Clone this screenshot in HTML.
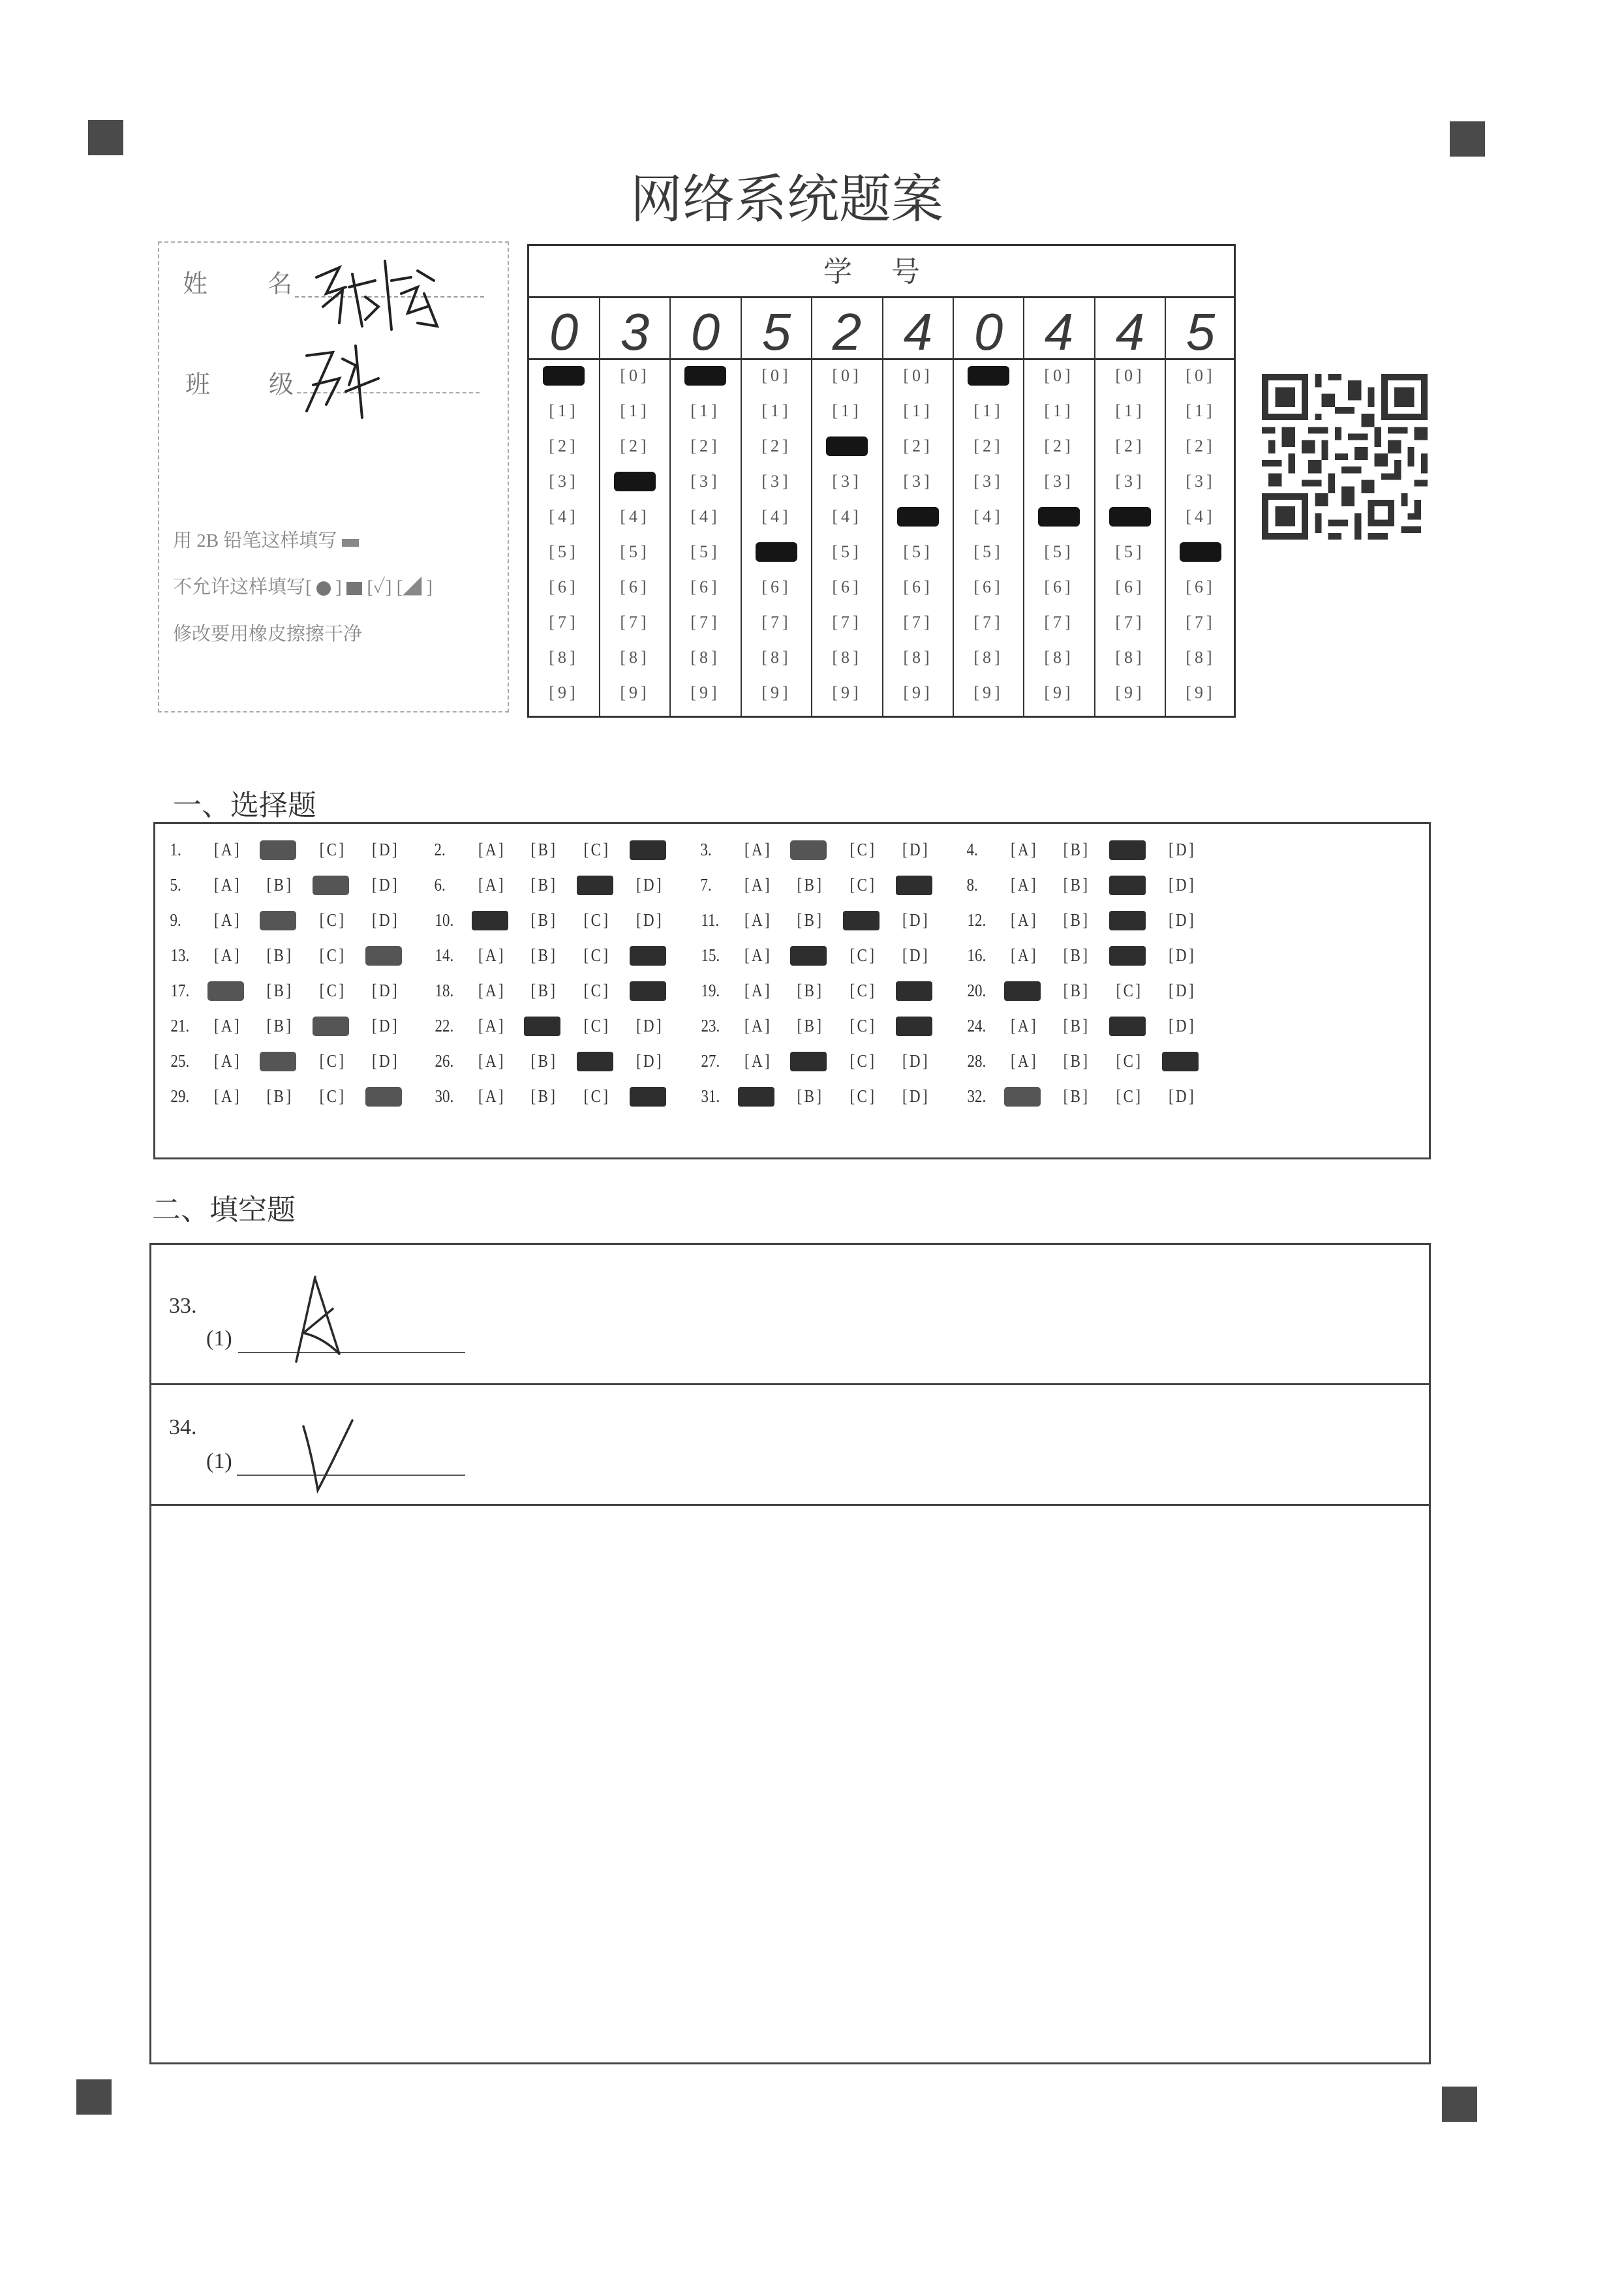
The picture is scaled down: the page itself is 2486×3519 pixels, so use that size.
<!DOCTYPE html>
<html><head><meta charset="utf-8">
<style>
html,body{margin:0;padding:0;background:#fff}
body{width:2486px;height:3519px;position:relative;overflow:hidden;font-family:"Liberation Serif","Noto Serif CJK SC",serif;color:#333}
.abs{position:absolute}
.mk{position:absolute;background:#4a4a4a;width:54px;height:54px}
.r{position:absolute;left:0;width:2486px;height:40px}
.q{position:absolute;top:0;height:40px}
.q span{position:absolute;top:0;height:40px;line-height:40px;font-size:27px;width:62px;text-align:center;letter-spacing:4px;transform:scaleX(.85)}
.q .n{left:-6px;width:auto;text-align:left;letter-spacing:0;font-size:27px}
.q .A{left:53px}.q .B{left:133px}.q .C{left:214px}.q .D{left:295px}
.q span.f{color:transparent;background:#2e2e2e;top:6px;height:30px;border-radius:4px;transform:none;width:56px}
.q span.g{color:transparent;background:#555;top:6px;height:30px;border-radius:5px;transform:none;width:56px}
.c1{left:265px}.c2{left:670px}.c3{left:1078px}.c4{left:1486px}
.idc{position:absolute;top:0;width:108px;height:1100px}
.idc div{position:absolute;left:0;width:108px;text-align:center;font-size:26px;line-height:30px;height:30px;color:#555;letter-spacing:5px}
.idc div.f{background:#151515;color:transparent;left:22px;width:64px;height:30px;border-radius:6px}
.lbl{position:absolute;font-size:38px;color:#777;font-family:"Liberation Serif","Noto Serif CJK SC",serif}
.small{position:absolute;font-size:29px;color:#888;font-family:"Liberation Serif","Noto Serif CJK SC",serif}
</style></head><body>

<div class="mk" style="left:135px;top:184px"></div>
<div class="mk" style="left:2222px;top:186px"></div>
<div class="mk" style="left:117px;top:3187px"></div>
<div class="mk" style="left:2210px;top:3198px"></div>

<div class="abs" style="left:966px;top:262px;font-size:80px;line-height:90px;color:#3a3a3a;letter-spacing:0">网络系统题案</div>

<div class="abs" style="left:242px;top:370px;width:534px;height:718px;border:2px dashed #aaa"></div>
<div class="lbl" style="left:280px;top:404px">姓</div>
<div class="lbl" style="left:410px;top:404px">名</div>
<div class="abs" style="left:452px;top:454px;width:290px;border-top:2px dashed #999"></div>
<div class="lbl" style="left:284px;top:558px">班</div>
<div class="lbl" style="left:412px;top:558px">级</div>
<div class="abs" style="left:455px;top:601px;width:280px;border-top:2px dashed #aaa"></div>
<div class="small" style="left:265px;top:806px">用 2B 铅笔这样填写 <span style="display:inline-block;width:26px;height:12px;background:#888"></span></div>
<div class="small" style="left:265px;top:877px">不允许这样填写[ <span style="display:inline-block;width:22px;height:22px;border-radius:50%;background:#777;vertical-align:middle"></span> ] <span style="display:inline-block;width:24px;height:20px;background:#777;vertical-align:middle"></span> [✓] [◢ ]</div>
<div class="small" style="left:265px;top:949px">修改要用橡皮擦擦干净</div>
<svg class="abs" style="left:0;top:0" width="800" height="700">
<g fill="none" stroke="#222" stroke-width="4" stroke-linecap="round">
<path d="M485 425 L520 410 L500 450 L530 440 M495 470 L525 445 L520 495 M540 420 L555 500 M535 440 L575 430 M560 455 L580 470 L560 490 M590 400 L600 505 M600 430 L630 425 M615 450 L640 440 L625 480 L655 470 M640 415 L665 430 M650 450 L670 500 L640 495"/>
<path d="M470 545 L510 540 L490 585 L470 630 M480 590 L520 580 L500 620 M525 550 L545 560 L535 590 M545 530 L555 640 M530 600 L580 580"/>
</g></svg>

<div class="abs" style="left:808px;top:374px;width:1086px;height:726px;border:3px solid #333;box-sizing:border-box"></div>
<div class="abs" style="left:808px;top:454px;width:1086px;border-top:3px solid #333"></div>
<div class="abs" style="left:808px;top:549px;width:1086px;border-top:3px solid #333"></div>
<div class="abs" style="left:1262px;top:380px;font-size:44px;color:#444;letter-spacing:60px">学号</div>
<svg class="abs" style="left:0;top:0" width="2486" height="1110">
<g stroke="#333" stroke-width="2">
<line x1="919" y1="454" x2="919" y2="1100"/><line x1="1027" y1="454" x2="1027" y2="1100"/><line x1="1136" y1="454" x2="1136" y2="1100"/><line x1="1244" y1="454" x2="1244" y2="1100"/><line x1="1353" y1="454" x2="1353" y2="1100"/><line x1="1461" y1="454" x2="1461" y2="1100"/><line x1="1569" y1="454" x2="1569" y2="1100"/><line x1="1678" y1="454" x2="1678" y2="1100"/><line x1="1786" y1="454" x2="1786" y2="1100"/>
</g>
<g font-family="Liberation Sans Narrow, Liberation Sans, sans-serif" font-style="italic" font-size="80" fill="#3a3a3a" text-anchor="middle">
<text x="864" y="536">0</text><text x="973" y="536">3</text><text x="1081" y="536">0</text><text x="1190" y="536">5</text><text x="1298" y="536">2</text><text x="1407" y="536">4</text><text x="1515" y="536">0</text><text x="1623" y="536">4</text><text x="1732" y="536">4</text><text x="1840" y="536">5</text>
</g>
</svg>
<div class="idc" style="left:810px"><div class="f" style="top:561px">0</div><div style="top:615px">[1]</div><div style="top:669px">[2]</div><div style="top:723px">[3]</div><div style="top:777px">[4]</div><div style="top:831px">[5]</div><div style="top:885px">[6]</div><div style="top:939px">[7]</div><div style="top:993px">[8]</div><div style="top:1047px">[9]</div></div>
<div class="idc" style="left:919px"><div style="top:561px">[0]</div><div style="top:615px">[1]</div><div style="top:669px">[2]</div><div class="f" style="top:723px">3</div><div style="top:777px">[4]</div><div style="top:831px">[5]</div><div style="top:885px">[6]</div><div style="top:939px">[7]</div><div style="top:993px">[8]</div><div style="top:1047px">[9]</div></div>
<div class="idc" style="left:1027px"><div class="f" style="top:561px">0</div><div style="top:615px">[1]</div><div style="top:669px">[2]</div><div style="top:723px">[3]</div><div style="top:777px">[4]</div><div style="top:831px">[5]</div><div style="top:885px">[6]</div><div style="top:939px">[7]</div><div style="top:993px">[8]</div><div style="top:1047px">[9]</div></div>
<div class="idc" style="left:1136px"><div style="top:561px">[0]</div><div style="top:615px">[1]</div><div style="top:669px">[2]</div><div style="top:723px">[3]</div><div style="top:777px">[4]</div><div class="f" style="top:831px">5</div><div style="top:885px">[6]</div><div style="top:939px">[7]</div><div style="top:993px">[8]</div><div style="top:1047px">[9]</div></div>
<div class="idc" style="left:1244px"><div style="top:561px">[0]</div><div style="top:615px">[1]</div><div class="f" style="top:669px">2</div><div style="top:723px">[3]</div><div style="top:777px">[4]</div><div style="top:831px">[5]</div><div style="top:885px">[6]</div><div style="top:939px">[7]</div><div style="top:993px">[8]</div><div style="top:1047px">[9]</div></div>
<div class="idc" style="left:1353px"><div style="top:561px">[0]</div><div style="top:615px">[1]</div><div style="top:669px">[2]</div><div style="top:723px">[3]</div><div class="f" style="top:777px">4</div><div style="top:831px">[5]</div><div style="top:885px">[6]</div><div style="top:939px">[7]</div><div style="top:993px">[8]</div><div style="top:1047px">[9]</div></div>
<div class="idc" style="left:1461px"><div class="f" style="top:561px">0</div><div style="top:615px">[1]</div><div style="top:669px">[2]</div><div style="top:723px">[3]</div><div style="top:777px">[4]</div><div style="top:831px">[5]</div><div style="top:885px">[6]</div><div style="top:939px">[7]</div><div style="top:993px">[8]</div><div style="top:1047px">[9]</div></div>
<div class="idc" style="left:1569px"><div style="top:561px">[0]</div><div style="top:615px">[1]</div><div style="top:669px">[2]</div><div style="top:723px">[3]</div><div class="f" style="top:777px">4</div><div style="top:831px">[5]</div><div style="top:885px">[6]</div><div style="top:939px">[7]</div><div style="top:993px">[8]</div><div style="top:1047px">[9]</div></div>
<div class="idc" style="left:1678px"><div style="top:561px">[0]</div><div style="top:615px">[1]</div><div style="top:669px">[2]</div><div style="top:723px">[3]</div><div class="f" style="top:777px">4</div><div style="top:831px">[5]</div><div style="top:885px">[6]</div><div style="top:939px">[7]</div><div style="top:993px">[8]</div><div style="top:1047px">[9]</div></div>
<div class="idc" style="left:1786px"><div style="top:561px">[0]</div><div style="top:615px">[1]</div><div style="top:669px">[2]</div><div style="top:723px">[3]</div><div style="top:777px">[4]</div><div class="f" style="top:831px">5</div><div style="top:885px">[6]</div><div style="top:939px">[7]</div><div style="top:993px">[8]</div><div style="top:1047px">[9]</div></div>

<svg class="abs" style="left:1934px;top:573px" width="254" height="254" viewBox="0 0 25 25" shape-rendering="crispEdges">
<g fill="#333">
<path d="M0 0h7v7h-7zM1 1v5h5v-5zM2 2h3v3h-3z" fill-rule="evenodd"/>
<path d="M18 0h7v7h-7zM19 1v5h5v-5zM20 2h3v3h-3z" fill-rule="evenodd"/>
<path d="M0 18h7v7h-7zM1 19v5h5v-5zM2 20h3v3h-3z" fill-rule="evenodd"/>
<path d="M8 0h1v2h-1zM10 0h2v1h-2zM13 1h2v3h-2zM9 3h2v2h-2zM16 2h1v3h-1zM11 5h3v1h-3zM8 6h1v1h-1zM15 6h2v2h-2zM0 8h2v1h-2zM3 8h2v3h-2zM7 8h3v1h-3zM11 8h1v2h-1zM13 9h3v1h-3zM17 8h1v3h-1zM19 8h3v1h-3zM23 8h2v2h-2zM1 10h1v2h-1zM6 10h2v2h-2zM9 10h1v3h-1zM14 11h2v2h-2zM19 10h2v2h-2zM22 11h1v3h-1zM0 13h3v1h-3zM4 12h1v3h-1zM7 13h2v2h-2zM11 12h2v1h-2zM12 14h3v1h-3zM17 12h2v2h-2zM20 13h1v2h-1zM24 12h1v3h-1zM1 15h2v2h-2zM6 16h3v1h-3zM10 15h1v3h-1zM15 16h2v2h-2zM18 15h3v1h-3zM23 16h2v1h-2zM8 18h2v2h-2zM12 17h2v3h-2zM16 19h4v4h-4zM17 20v2h2v-2zM21 18h1v2h-1zM23 19h1v3h-1zM8 21h1v3h-1zM10 22h3v1h-3zM14 21h1v4h-1zM21 23h3v1h-3zM10 24h2v1h-2zM16 24h3v1h-3zM22 21h1v1h-1z" fill-rule="evenodd"/>
</g></svg>

<div class="abs" style="left:265px;top:1198px;font-size:44px;color:#333">一、选择题</div>
<div class="abs" style="left:235px;top:1260px;width:1958px;height:517px;border:3px solid #444;box-sizing:border-box"></div>

<div class="r" style="top:1282px"><div class="q c1"><span class="n">1.</span><span class="A">[A]</span><span class="B g">B</span><span class="C">[C]</span><span class="D">[D]</span></div><div class="q c2"><span class="n">2.</span><span class="A">[A]</span><span class="B">[B]</span><span class="C">[C]</span><span class="D f">D</span></div><div class="q c3"><span class="n">3.</span><span class="A">[A]</span><span class="B g">B</span><span class="C">[C]</span><span class="D">[D]</span></div><div class="q c4"><span class="n">4.</span><span class="A">[A]</span><span class="B">[B]</span><span class="C f">C</span><span class="D">[D]</span></div></div>
<div class="r" style="top:1336px"><div class="q c1"><span class="n">5.</span><span class="A">[A]</span><span class="B">[B]</span><span class="C g">C</span><span class="D">[D]</span></div><div class="q c2"><span class="n">6.</span><span class="A">[A]</span><span class="B">[B]</span><span class="C f">C</span><span class="D">[D]</span></div><div class="q c3"><span class="n">7.</span><span class="A">[A]</span><span class="B">[B]</span><span class="C">[C]</span><span class="D f">D</span></div><div class="q c4"><span class="n">8.</span><span class="A">[A]</span><span class="B">[B]</span><span class="C f">C</span><span class="D">[D]</span></div></div>
<div class="r" style="top:1390px"><div class="q c1"><span class="n">9.</span><span class="A">[A]</span><span class="B g">B</span><span class="C">[C]</span><span class="D">[D]</span></div><div class="q c2"><span class="n">10.</span><span class="A f">A</span><span class="B">[B]</span><span class="C">[C]</span><span class="D">[D]</span></div><div class="q c3"><span class="n">11.</span><span class="A">[A]</span><span class="B">[B]</span><span class="C f">C</span><span class="D">[D]</span></div><div class="q c4"><span class="n">12.</span><span class="A">[A]</span><span class="B">[B]</span><span class="C f">C</span><span class="D">[D]</span></div></div>
<div class="r" style="top:1444px"><div class="q c1"><span class="n">13.</span><span class="A">[A]</span><span class="B">[B]</span><span class="C">[C]</span><span class="D g">D</span></div><div class="q c2"><span class="n">14.</span><span class="A">[A]</span><span class="B">[B]</span><span class="C">[C]</span><span class="D f">D</span></div><div class="q c3"><span class="n">15.</span><span class="A">[A]</span><span class="B f">B</span><span class="C">[C]</span><span class="D">[D]</span></div><div class="q c4"><span class="n">16.</span><span class="A">[A]</span><span class="B">[B]</span><span class="C f">C</span><span class="D">[D]</span></div></div>
<div class="r" style="top:1498px"><div class="q c1"><span class="n">17.</span><span class="A g">A</span><span class="B">[B]</span><span class="C">[C]</span><span class="D">[D]</span></div><div class="q c2"><span class="n">18.</span><span class="A">[A]</span><span class="B">[B]</span><span class="C">[C]</span><span class="D f">D</span></div><div class="q c3"><span class="n">19.</span><span class="A">[A]</span><span class="B">[B]</span><span class="C">[C]</span><span class="D f">D</span></div><div class="q c4"><span class="n">20.</span><span class="A f">A</span><span class="B">[B]</span><span class="C">[C]</span><span class="D">[D]</span></div></div>
<div class="r" style="top:1552px"><div class="q c1"><span class="n">21.</span><span class="A">[A]</span><span class="B">[B]</span><span class="C g">C</span><span class="D">[D]</span></div><div class="q c2"><span class="n">22.</span><span class="A">[A]</span><span class="B f">B</span><span class="C">[C]</span><span class="D">[D]</span></div><div class="q c3"><span class="n">23.</span><span class="A">[A]</span><span class="B">[B]</span><span class="C">[C]</span><span class="D f">D</span></div><div class="q c4"><span class="n">24.</span><span class="A">[A]</span><span class="B">[B]</span><span class="C f">C</span><span class="D">[D]</span></div></div>
<div class="r" style="top:1606px"><div class="q c1"><span class="n">25.</span><span class="A">[A]</span><span class="B g">B</span><span class="C">[C]</span><span class="D">[D]</span></div><div class="q c2"><span class="n">26.</span><span class="A">[A]</span><span class="B">[B]</span><span class="C f">C</span><span class="D">[D]</span></div><div class="q c3"><span class="n">27.</span><span class="A">[A]</span><span class="B f">B</span><span class="C">[C]</span><span class="D">[D]</span></div><div class="q c4"><span class="n">28.</span><span class="A">[A]</span><span class="B">[B]</span><span class="C">[C]</span><span class="D f">D</span></div></div>
<div class="r" style="top:1660px"><div class="q c1"><span class="n">29.</span><span class="A">[A]</span><span class="B">[B]</span><span class="C">[C]</span><span class="D g">D</span></div><div class="q c2"><span class="n">30.</span><span class="A">[A]</span><span class="B">[B]</span><span class="C">[C]</span><span class="D f">D</span></div><div class="q c3"><span class="n">31.</span><span class="A f">A</span><span class="B">[B]</span><span class="C">[C]</span><span class="D">[D]</span></div><div class="q c4"><span class="n">32.</span><span class="A g">A</span><span class="B">[B]</span><span class="C">[C]</span><span class="D">[D]</span></div></div>

<div class="abs" style="left:233px;top:1818px;font-size:44px;color:#333">二、填空题</div>
<div class="abs" style="left:229px;top:1905px;width:1964px;height:1259px;border:3px solid #444;box-sizing:border-box"></div>
<div class="abs" style="left:229px;top:2120px;width:1964px;border-top:3px solid #444"></div>
<div class="abs" style="left:229px;top:2305px;width:1964px;border-top:3px solid #444"></div>
<div class="abs" style="left:259px;top:1983px;font-size:34px;color:#333">33.</div>
<div class="abs" style="left:316px;top:2033px;font-size:34px;color:#333">(1)</div>
<div class="abs" style="left:365px;top:2072px;width:348px;border-top:2px solid #555"></div>
<div class="abs" style="left:259px;top:2169px;font-size:34px;color:#333">34.</div>
<div class="abs" style="left:316px;top:2221px;font-size:34px;color:#333">(1)</div>
<div class="abs" style="left:363px;top:2260px;width:350px;border-top:2px solid #555"></div>
<svg class="abs" style="left:0;top:0" width="800" height="2400">
<g fill="none" stroke="#2a2a2a" stroke-width="3.5" stroke-linecap="round">
<path d="M483 1957 L454 2087 M483 1960 L520 2075 M510 2006 L465 2043 Q495 2050 520 2075"/>
<path d="M465 2186 Q478 2230 487 2284 Q500 2260 540 2177"/>
</g></svg>
</body></html>
